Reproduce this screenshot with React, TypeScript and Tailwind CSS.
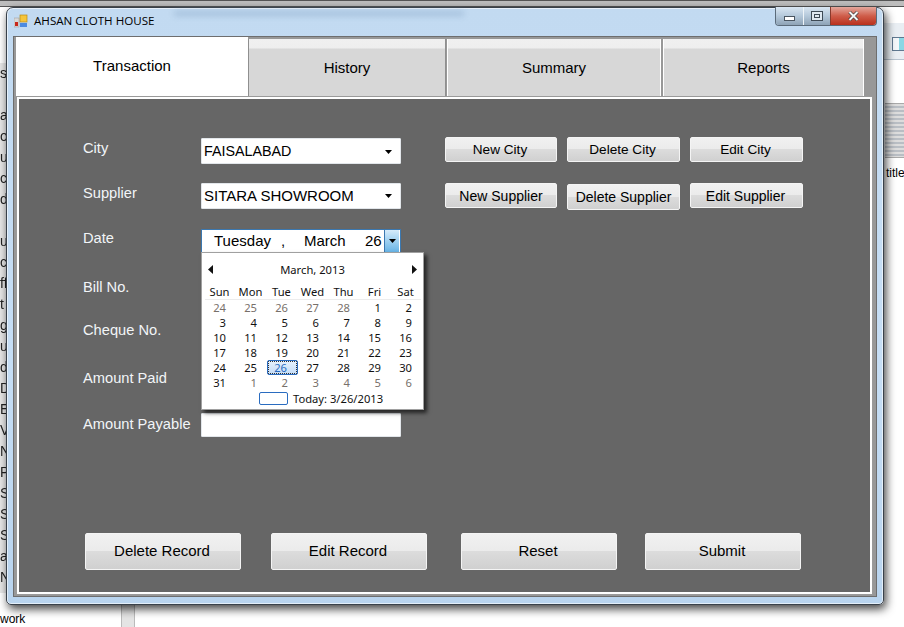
import type { ReactNode } from "react";

const sliverTexts = ["s", "", "ar", "oc", "us", "ct", "dd", "", "up", "c", "ff", "t", "g", "up", "d9", "D", "Er", "V", "N", "P", "Se", "Sc", "St", "a", "N"];

const weeks = [
  [24, 25, 26, 27, 28, 1, 2],
  [3, 4, 5, 6, 7, 8, 9],
  [10, 11, 12, 13, 14, 15, 16],
  [17, 18, 19, 20, 21, 22, 23],
  [24, 25, 26, 27, 28, 29, 30],
  [31, 1, 2, 3, 4, 5, 6],
];

const Arrow = () => (
  <svg width="7" height="4" viewBox="0 0 7 4" className="shrink-0">
    <path d="M0 0h7L3.5 4z" fill="#000" />
  </svg>
);

const WinButton = ({ label, className }: { label: string; className: string }) => (
  <button
    className={`flex items-center justify-center rounded-[2px] border border-[#f4f4f4] bg-[linear-gradient(#f1f1f1_0%,#ebebeb_48%,#dcdcdc_50%,#d0d0d0_100%)] font-['Liberation_Sans',sans-serif] text-[#000] ${className}`}
  >
    {label}
  </button>
);

const Field = ({ children, className = "" }: { children?: ReactNode; className?: string }) => (
  <div className={`flex w-[200px] items-center rounded-[1px] border border-[#e2e6ea] bg-white pl-[2px] pr-[8px] text-black ${className}`}>
    {children}
  </div>
);

const Row = ({ label, height, labelClass, children }: { label: string; height: string; labelClass: string; children?: ReactNode }) => (
  <div className={`flex items-start ${height}`}>
    <div className={`w-[118px] shrink-0 text-[14.67px] leading-[17px] text-[#f2f5f8] ${labelClass}`}>{label}</div>
    {children}
  </div>
);

const Calendar = () => (
  <div className="absolute left-[182px] top-[153px] h-[158px] w-[223px] border border-[#a0a0a0] bg-white pl-[3px] font-['Noto_Sans',sans-serif] text-[11.2px] text-[#111] shadow-[3px_3px_4px_rgba(0,0,0,0.65)]">
    <div className="flex h-[31px] items-center justify-between pl-[3px] pr-[6px] pt-[2px]">
      <svg width="5" height="9" viewBox="0 0 5 9"><path d="M5 0v9L0 4.5z" fill="#111" /></svg>
      <span className="leading-[14px]">March, 2013</span>
      <svg width="5" height="9" viewBox="0 0 5 9"><path d="M0 0v9l5-4.5z" fill="#111" /></svg>
    </div>
    <div className="mr-[2px] grid h-[16px] grid-cols-[repeat(7,31px)] items-center border-b border-[#ececec] leading-[14px]">
      {["Sun", "Mon", "Tue", "Wed", "Thu", "Fri", "Sat"].map((d) => (
        <span key={d} className="pr-[2px] text-center">{d}</span>
      ))}
    </div>
    <div className="grid grid-cols-[repeat(7,31px)] auto-rows-[15px] leading-[15px]">
      {weeks.map((week, w) =>
        week.map((d, i) => {
          const muted = (w === 0 && d > 20) || (w === 5 && d < 10);
          const selected = w === 4 && i === 2;
          return (
            <span
              key={`${w}-${i}`}
              className={`pr-[10px] text-right ${muted ? "text-[#77706a]" : ""} ${selected ? "rounded-[2px] border border-[#2a6cc0] bg-[linear-gradient(#e6f1fd,#c4dcf7)] pr-[9px] leading-[13px] text-[#2a6cc0] outline-1 -outline-offset-2 outline-dotted outline-[#333]" : ""}`}
            >
              {d}
            </span>
          );
        })
      )}
    </div>
    <div className="mt-[1px] flex h-[15px] items-center pl-[54px] leading-[15px]">
      <span className="mr-[5px] h-[13px] w-[29px] rounded-[2px] border border-[#2a6cc0]" />
      <span>Today: 3/26/2013</span>
    </div>
  </div>
);

export default function App() {
  return (
    <div className="relative h-[627px] w-[904px] overflow-hidden bg-white font-['Liberation_Sans',sans-serif]">
      {/* desktop behind the window */}
      <div className="absolute left-0 top-0 h-[7px] w-[904px] border-y border-[#555] bg-[#bdbdbd]" />
      <div className="absolute left-0 top-[63px] flex h-[530px] w-[6px] flex-col overflow-hidden bg-[#e8e8e8] text-[14px] leading-[21px] text-[#222] blur-[0.3px]">
        {sliverTexts.map((t, i) => (
          <span key={i} className="h-[21px] whitespace-nowrap">{t}</span>
        ))}
      </div>
      <div className="absolute left-[884px] top-[23px] h-[37px] w-[20px] border-b border-[#b8c4d0] bg-[#e9eef3] pl-[8px] pt-[14px]">
        <div className="h-[14px] w-[14px] border border-[#5f7890] bg-[linear-gradient(90deg,#f4f7fa_50%,#8ad7e4_50%)]" />
      </div>
      <div className="absolute left-[885px] top-[103px] h-[55px] w-[19px] border-y border-[#a9a9a9] bg-[repeating-linear-gradient(#dcdcdc_0px,#dcdcdc_2px,#b9bec4_2px,#b9bec4_4px)]" />
      <div className="absolute left-[886px] top-[165px] text-[12px] leading-[16px] text-black">title</div>
      <div className="absolute left-0 top-[611px] text-[12px] leading-[16px] text-black">work</div>
      <div className="absolute left-[121px] top-[605px] h-[22px] w-[14px] border-x border-[#bbb] bg-[#e4e4e4]" />

      {/* window */}
      <div className="absolute left-[6px] top-[7px] flex h-[598px] w-[878px] flex-col rounded-t-[7px] rounded-b-[5px] border border-[#39414a] bg-[linear-gradient(#c2daf1,#c6def5_60%,#b9d4ee)] pb-[7px] pl-[6px] pr-[6px] shadow-[inset_0_0_0_1px_rgba(255,255,255,0.6),2px_4px_10px_rgba(0,0,0,0.75)]">
        <div className="flex h-[28px] shrink-0 items-start">
          <div className="flex items-center pl-[1px] pt-[4px]">
            <svg width="14" height="14" viewBox="0 0 14 14" className="mr-[6px]">
              <rect x="0" y="4" width="5" height="9" fill="#d8d8d8" stroke="#999" strokeWidth="0.5" />
              <rect x="1" y="8" width="3" height="4" fill="#c8281c" />
              <rect x="6" y="1" width="7" height="7" fill="#f6c53a" stroke="#b98a16" strokeWidth="0.7" />
              <rect x="6" y="9" width="7" height="4" fill="#4c8ae0" />
            </svg>
            <span className="font-['Open_Sans',sans-serif] text-[11.6px] leading-[18px] text-black">AHSAN CLOTH HOUSE</span>
          </div>
          {/* blurred glass: what shows through the title bar */}
          <div className="ml-[20px] mt-[3px] h-[5px] w-[290px] bg-[#7f9fc0] opacity-45 blur-[3px]" />
          <div className="-mt-[1px] ml-auto flex h-[19px] overflow-hidden rounded-b-[4px] border border-t-0 border-[#5b6b7a]">
            <div className="flex w-[27px] items-center justify-center bg-[linear-gradient(#d9e6f2,#b4c8da_50%,#8ea3b6)] pt-[4px]">
              <div className="h-[5px] w-[11px] border border-[#4a5560] bg-white" />
            </div>
            <div className="flex w-[27px] items-center justify-center border-l border-[#eef4f8] bg-[linear-gradient(#d9e6f2,#b4c8da_50%,#8ea3b6)]">
              <div className="flex h-[10px] w-[12px] items-center justify-center border border-[#3e4a55] bg-[#dfe8f0]">
                <div className="h-[4px] w-[6px] border border-[#3e4a55]" />
              </div>
            </div>
            <div className="flex w-[46px] items-center justify-center border-l border-[#8a3a2c] bg-[linear-gradient(#e4a79c,#cf5d4a_50%,#b9301c)]">
              <svg width="11" height="10" viewBox="0 0 11 10">
                <path d="M1.5 1l8 8M9.5 1l-8 8" stroke="#3c3c3c" strokeWidth="3.4" />
                <path d="M1.5 1l8 8M9.5 1l-8 8" stroke="#f5f5f5" strokeWidth="2" />
              </svg>
            </div>
          </div>
        </div>

        {/* tab control */}
        <div className="flex min-h-0 flex-1 flex-col border border-[#6e6e6e] bg-[#989898] pl-[2px]">
          <div className="flex h-[60px] shrink-0 text-[15px] leading-[18px] text-black">
            <div className="flex h-[60px] w-[232px] items-center justify-center bg-white pb-[3px]">Transaction</div>
            <div className="mt-[2px] flex h-[57px] w-[198px] items-center justify-center border-x border-[#8f8f8f] bg-[linear-gradient(#f0f0f0_0px,#eeeeee_9px,#d7d7d7_10px,#d7d7d7_100%)]">History</div>
            <div className="ml-[1px] mt-[2px] flex h-[57px] w-[214px] items-center justify-center border-x border-white bg-[linear-gradient(#f0f0f0_0px,#eeeeee_9px,#d7d7d7_10px,#d7d7d7_100%)]">Summary</div>
            <div className="ml-[2px] mt-[2px] flex h-[57px] w-[201px] items-center justify-center border-x border-white bg-[linear-gradient(#f0f0f0_0px,#eeeeee_9px,#d7d7d7_10px,#d7d7d7_100%)]">Reports</div>
          </div>
          <div className="mb-[2px] ml-[1px] mr-[4px] min-h-0 flex-1 border-2 border-white bg-[#666666] shadow-[0_0_0_1px_#9a9a9a]">
            <div className="relative flex h-full flex-col pl-[64px] pt-[38px]">
              <Row label="City" height="h-[46px]" labelClass="pt-[3px]">
                <Field className="mt-[1px] h-[26px] pt-[1px] text-[14.3px]">
                  <span className="flex-1">FAISALABAD</span>
                  <Arrow />
                </Field>
                <div className="ml-[44px] flex gap-[10px]">
                  <WinButton label="New City" className="h-[25px] w-[112px] pr-[2px] pt-[1px] text-[13.6px]" />
                  <WinButton label="Delete City" className="h-[25px] w-[113px] pr-[2px] pt-[1px] text-[13.6px]" />
                  <WinButton label="Edit City" className="h-[25px] w-[113px] pr-[2px] pt-[1px] text-[13.6px]" />
                </div>
              </Row>
              <Row label="Supplier" height="h-[46px]" labelClass="pt-[2px]">
                <Field className="h-[26px] text-[15px]">
                  <span className="flex-1">SITARA SHOWROOM</span>
                  <Arrow />
                </Field>
                <div className="ml-[44px] flex items-start gap-[10px]">
                  <WinButton label="New Supplier" className="h-[25px] w-[112px] pt-[1px] text-[14px]" />
                  <WinButton label="Delete Supplier" className="mt-[1px] h-[26px] w-[113px] text-[14px]" />
                  <WinButton label="Edit Supplier" className="h-[25px] w-[113px] pr-[2px] pt-[1px] text-[14px]" />
                </div>
              </Row>
              <Row label="Date" height="h-[48px]" labelClass="pt-[1px]">
                <div className="flex h-[24px] w-[200px] items-center border border-[#3b78b0] bg-white text-[15px] leading-[18px] text-black">
                  <span className="ml-[12px] w-[67px]">Tuesday</span>
                  <span className="w-[23px]">,</span>
                  <span className="w-[61px]">March</span>
                  <span className="w-[19px]">26</span>
                  <div className="flex h-[22px] w-[15px] items-center justify-center border-l border-[#3b78b0] bg-[linear-gradient(#d6ecfb,#67b4e6)]">
                    <Arrow />
                  </div>
                </div>
              </Row>
              <Row label="Bill No." height="h-[45px]" labelClass="pt-[2px]" />
              <Row label="Cheque No." height="h-[48px]" labelClass="" />
              <Row label="Amount Paid" height="h-[46px]" labelClass="" />
              <Row label="Amount Payable" height="h-[117px]" labelClass="">
                <Field className="-mt-[3px] h-[24px]" />
              </Row>
              <div className="flex text-[15px]">
                <WinButton label="Delete Record" className="ml-[2px] h-[37px] w-[156px] pr-[2px] text-[15px]" />
                <WinButton label="Edit Record" className="ml-[30px] h-[37px] w-[156px] pr-[2px] text-[15px]" />
                <WinButton label="Reset" className="ml-[34px] h-[37px] w-[156px] pr-[2px] text-[15px]" />
                <WinButton label="Submit" className="ml-[28px] h-[37px] w-[156px] pr-[2px] text-[15px]" />
              </div>
              <Calendar />
            </div>
          </div>
        </div>
      </div>
    </div>
  );
}
